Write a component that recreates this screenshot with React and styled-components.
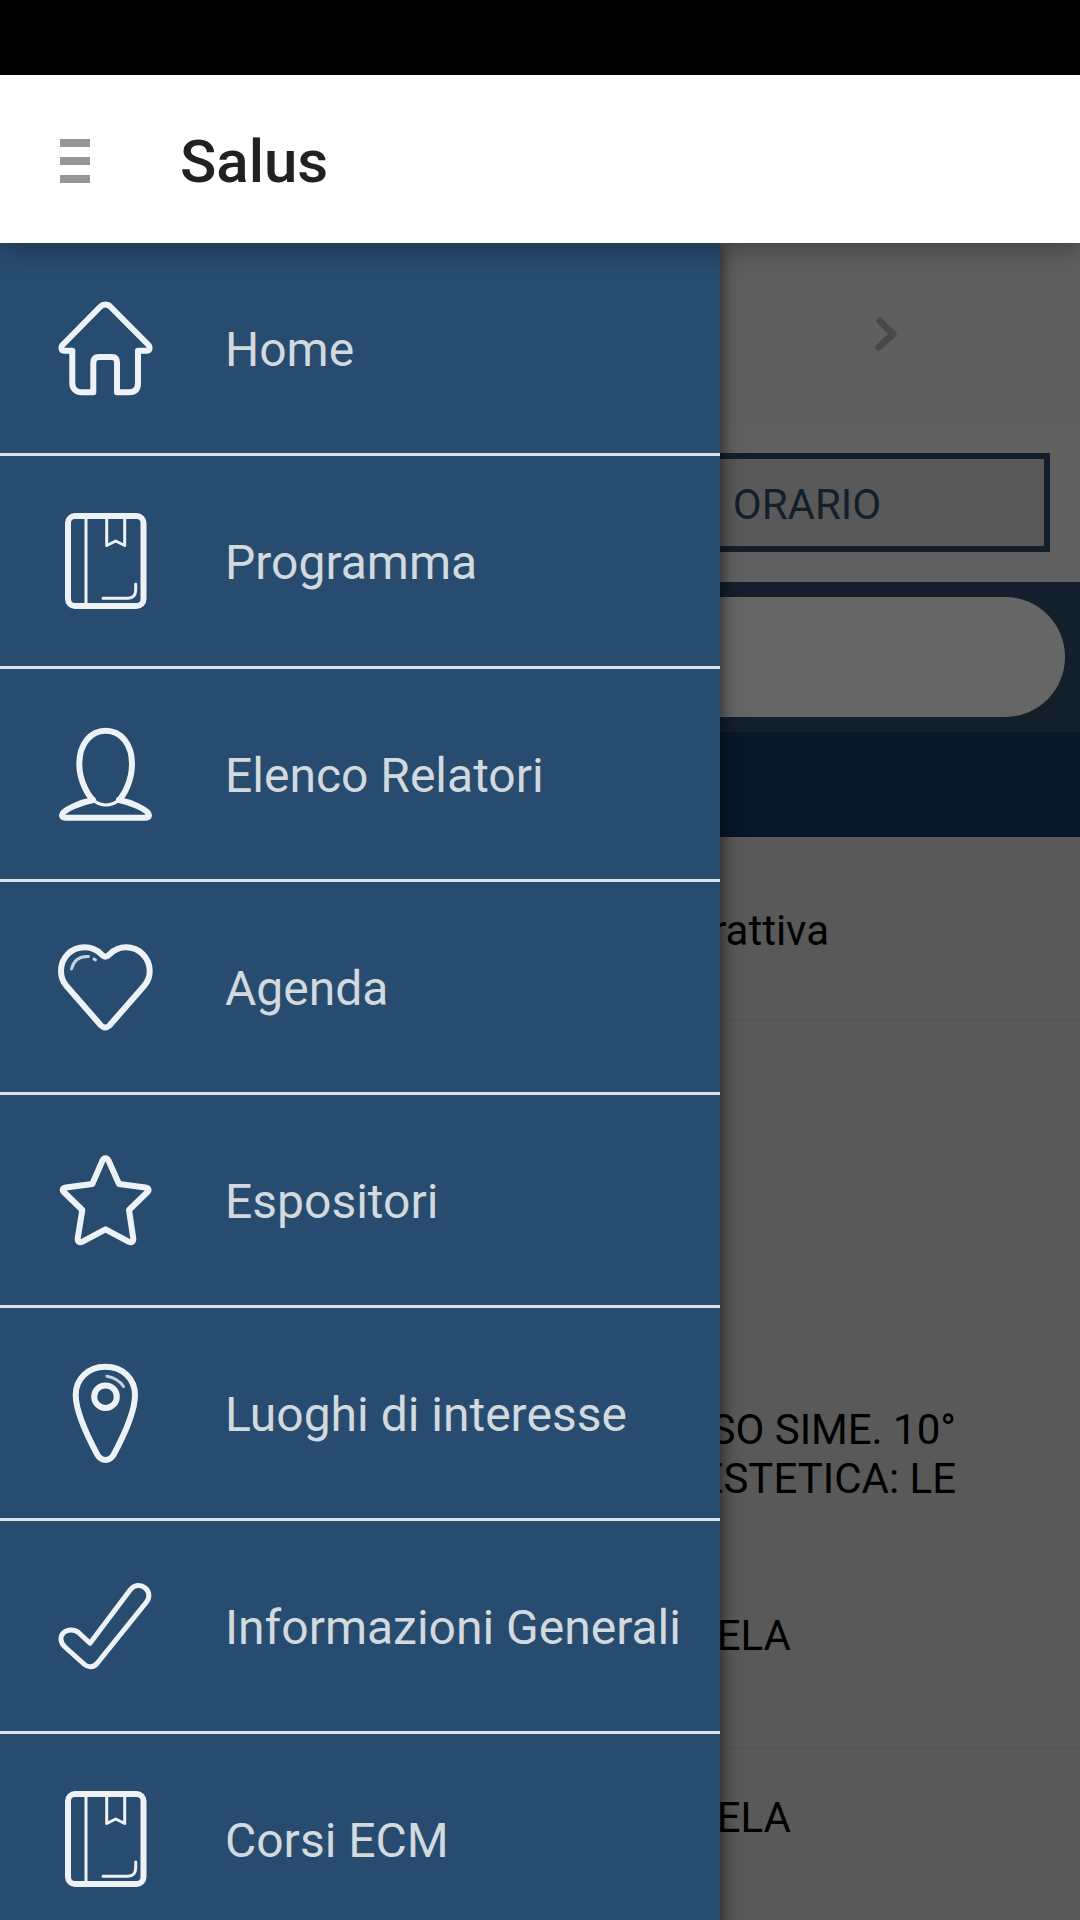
import React from "react";
import styled, { createGlobalStyle } from "styled-components";

const menu = [
  { label: "Home", href: "#home", icon: HomeIcon },
  { label: "Programma", href: "#programma", icon: BookIcon },
  { label: "Elenco Relatori", href: "#relatori", icon: PersonIcon },
  { label: "Agenda", href: "#agenda", icon: HeartIcon },
  { label: "Espositori", href: "#espositori", icon: StarIcon },
  { label: "Luoghi di interesse", href: "#luoghi", icon: PinIcon },
  { label: "Informazioni Generali", href: "#informazioni", icon: CheckIcon },
  { label: "Corsi ECM", href: "#corsi", icon: BookIcon },
];

// rows = text lines reserved for the title, end = free space on its right
const sessions = [
  { id: 1, text: ["interattiva"], rows: 1, end: 251 },
  { id: 2, text: [], rows: 1, end: 251 },
  { id: 3, text: [], rows: 1, end: 251 },
  { id: 4, text: ["CORSO SIME. 10°", "ESTETICA: LE"], rows: 3, end: 124 },
  { id: 5, text: ["TELA"], rows: 2, end: 289 },
  { id: 6, text: ["TELA"], rows: 2, end: 289 },
];

export default function App() {
  return (
    <Screen>
      <GlobalStyle />
      <StatusBar />
      <Header>
        <MenuButton type="button" aria-label="Menu">
          <MenuBar />
          <MenuBar />
          <MenuBar />
        </MenuButton>
        <Title>Salus</Title>
      </Header>
      <Body>
        <main>
          <DayNav>
            <NextButton type="button" aria-label="Giorno successivo">
              <svg width="24" height="36" viewBox="0 0 24 36">
                <path d="M6 5L19 18L5 31" />
              </svg>
            </NextButton>
          </DayNav>
          <Tabs>
            <Tab type="button">ORARIO</Tab>
          </Tabs>
          <SearchBar>
            <SearchInput type="search" aria-label="Cerca" />
          </SearchBar>
          <DayHeading />
          <SessionList>
            {sessions.map((session) => (
              <Session key={session.id} $end={session.end}>
                <SessionTitle $rows={session.rows}>
                  {session.text.map((line) => (
                    <div key={line}>{line}</div>
                  ))}
                </SessionTitle>
              </Session>
            ))}
          </SessionList>
        </main>
        <Scrim />
        <Drawer>
          {menu.map(({ label, href, icon: Icon }) => (
            <DrawerLink key={label} href={href}>
              <Icon />
              <DrawerLabel>{label}</DrawerLabel>
            </DrawerLink>
          ))}
        </Drawer>
      </Body>
    </Screen>
  );
}

function HomeIcon() {
  return (
    <Icon viewBox="0 0 96 96">
      <path d="M43 7L6 44.500C3.500 47 4 50.700 7.500 50.700H15.300V83C15.300 89 19 92.300 25 92.300H36.300V63C36.300 59 38 57 42 57H55C58.500 57 60 59 60 63V92.300H72C78 92.300 81 89 81 83V50.700H89.500C93 50.700 93.500 47 91 44.500L53.700 7C50.500 3.800 46.200 3.800 43 7Z" />
    </Icon>
  );
}

function BookIcon() {
  return (
    <Icon viewBox="0 0 96 96">
      <rect x="11" y="3" width="75.500" height="90" rx="7" />
      <ThinLine d="M29 5V91M49.700 5V32.500L58.700 28L67.700 32.500V5" />
      <ThinLine d="M46 85.300H71C76 85.300 78.700 82 78.700 77V71" />
    </Icon>
  );
}

function PersonIcon() {
  return (
    <Icon viewBox="0 0 96 96">
      <path d="M36 74C32 70 22.300 56 22.300 38C22.300 18 33.500 4.700 48.700 4.700S75 18 75 38C75 56 66 70 62 74" />
      <ThinLine d="M36 74C44 80.500 54 80.500 62 74" />
      <path d="M36 74C25 76 5 84 5 89C5 91 6.500 91.700 8.500 91.700H88.500C90.500 91.700 92 91 92 89C92 84 73 76 62 74" />
    </Icon>
  );
}

function HeartIcon() {
  return (
    <Icon viewBox="0 0 96 96">
      <path d="M48.300 17.700C46.500 17.700 45.500 16.500 44 15C40 11 34 8.300 27.500 8.300C14 8.300 4 19 4 32C4 38 6 43 9.500 47L44 86.500C46.500 89 50 89 52.500 86.500L87 47C90.500 43 92.700 38 92.700 32C92.700 19 82.500 8.300 69 8.300C62.500 8.300 57 11 53 15C51.500 16.500 50 17.700 48.300 17.700Z" />
      <ThinLine d="M14.500 30C16.500 22 22 17 31.500 17.500M37 20L38.500 21" opacity="0.8" />
    </Icon>
  );
}

function StarIcon() {
  return (
    <Icon viewBox="0 0 96 96">
      <path d="M45.500 8.500C47 5.500 50 5.500 51.500 8.500L62 32L88.500 35.500C91.800 36 92.300 38.300 90.500 40L72 58L76.300 86.500C76.500 89.800 74.500 91 72 89.800L48.500 77.300L25 89.800C22.500 91 20.500 89.800 20.700 86.500L25.300 58L6.800 40C5 38.300 5.500 36 8.800 35.500L35.300 32Z" />
    </Icon>
  );
}

function PinIcon() {
  return (
    <Icon viewBox="0 0 96 96">
      <path d="M48.500 1.700C31 1.700 18.700 14 18.700 30C18.700 48 33 76 40.500 90C44.500 96.500 52.500 96.500 56.500 90C64 76 78 48 78 30C78 14 66 1.700 48.500 1.700Z" />
      <circle cx="48.500" cy="31.700" r="11.300" />
      <ThinLine d="M50 11.300C57 12.500 62.500 15.500 66.500 21.500" opacity="0.8" />
    </Icon>
  );
}

function CheckIcon() {
  return (
    <Icon viewBox="0 0 96 96" $stroke={5}>
      <path d="M73.500 11.500C77.500 6.500 84 6.500 88.300 10C92.500 13.500 93 19.500 89.500 24L40 85.500C36.500 89.500 31 89.700 27.500 86.500L8 69C3 64.500 2.800 58.500 6.500 54.800C10.500 51 17.500 51 21.500 54.500L33 65.300Z" />
    </Icon>
  );
}

const GlobalStyle = createGlobalStyle`
  * {
    box-sizing: border-box;
  }
  body {
    margin: 0;
    font-family: Roboto, "Liberation Sans", sans-serif;
    background: #dedede;
  }
`;

const Screen = styled.div`
  display: flex;
  flex-direction: column;
  height: 100vh;
  overflow: hidden;
`;

const StatusBar = styled.div`
  flex: none;
  height: 75px;
  background: #000;
`;

const Header = styled.header`
  position: relative;
  z-index: 1;
  flex: none;
  display: flex;
  align-items: center;
  gap: 90px;
  height: 168px;
  padding: 4px 60px 0;
  background: #fff;
  box-shadow: 0 6px 24px rgba(0, 0, 0, 0.3);
`;

const MenuButton = styled.button`
  display: flex;
  flex-direction: column;
  gap: 10px;
  width: 30px;
  padding: 0;
  border: 0;
  background: none;
`;

const MenuBar = styled.span`
  height: 8px;
  background: #969696;
`;

const Title = styled.h1`
  margin: 0;
  padding-top: 2px;
  font-size: 60px;
  font-weight: 500;
  line-height: 72px;
  color: #212121;
`;

const Body = styled.div`
  position: relative;
  flex: 1;
  min-height: 0;
  overflow: hidden;
`;

const DayNav = styled.div`
  display: flex;
  align-items: center;
  justify-content: flex-end;
  height: 181px;
  padding-right: 182px;
  background: #ededed;
`;

const NextButton = styled.button`
  display: flex;
  padding: 0;
  border: 0;
  background: none;

  path {
    fill: none;
    stroke: #b4b4b4;
    stroke-width: 7px;
    stroke-linecap: round;
    stroke-linejoin: round;
  }
`;

const Tabs = styled.div`
  display: flex;
  justify-content: flex-end;
  padding: 29px 30px 30px;
  background: #efefef;
`;

const Tab = styled.button`
  width: 486px;
  height: 99px;
  padding: 4px 0 0;
  border: 6px solid #30506e;
  background: #dfdfdf;
  color: #30506e;
  font-family: inherit;
  font-size: 42px;
`;

const SearchBar = styled.div`
  padding: 15px;
  background: #30506e;
`;

const SearchInput = styled.input`
  display: block;
  width: 100%;
  height: 120px;
  padding: 0 60px;
  border: 0;
  border-radius: 60px;
  background: #fff;
  font-family: inherit;
  font-size: 42px;
`;

const DayHeading = styled.div`
  height: 105px;
  background: #163e66;
`;

const SessionList = styled.ul`
  margin: 0;
  padding: 2px 0 0;
  list-style: none;
  background: #dedede;
`;

const Session = styled.li`
  display: flex;
  align-items: center;
  justify-content: flex-end;
  height: 182px;
  padding: 3px ${(props) => props.$end}px 0 0;
  border-bottom: 2px solid #d6d6d6;
`;

const SessionTitle = styled.div`
  min-height: ${(props) => props.$rows * 48}px;
  font-size: 42px;
  line-height: 49px;
  text-align: right;
  color: #000;
`;

const Scrim = styled.div`
  position: absolute;
  inset: 0;
  background: rgba(0, 0, 0, 0.6);
`;

const Drawer = styled.nav`
  position: absolute;
  top: 0;
  left: 0;
  width: calc(100% * 2 / 3);
  background: #284c6f;
  box-shadow: 0 0 18px rgba(0, 0, 0, 0.7);
`;

const DrawerLink = styled.a`
  display: flex;
  align-items: center;
  gap: 72px;
  height: 213px;
  padding-left: 57px;
  border-bottom: 3px solid #d9e1ea;
  color: #d2d9df;
  text-decoration: none;
`;

const DrawerLabel = styled.span`
  padding-top: 3px;
  font-size: 48px;
  line-height: 56px;
  white-space: nowrap;
`;

const Icon = styled.svg`
  flex: none;
  width: 96px;
  height: 96px;
  overflow: visible;
  fill: none;
  stroke: #eef2f6;
  stroke-width: ${(props) => props.$stroke || 6}px;
  stroke-linecap: round;
  stroke-linejoin: round;
`;

const ThinLine = styled.path`
  stroke-width: 3px;
`;
